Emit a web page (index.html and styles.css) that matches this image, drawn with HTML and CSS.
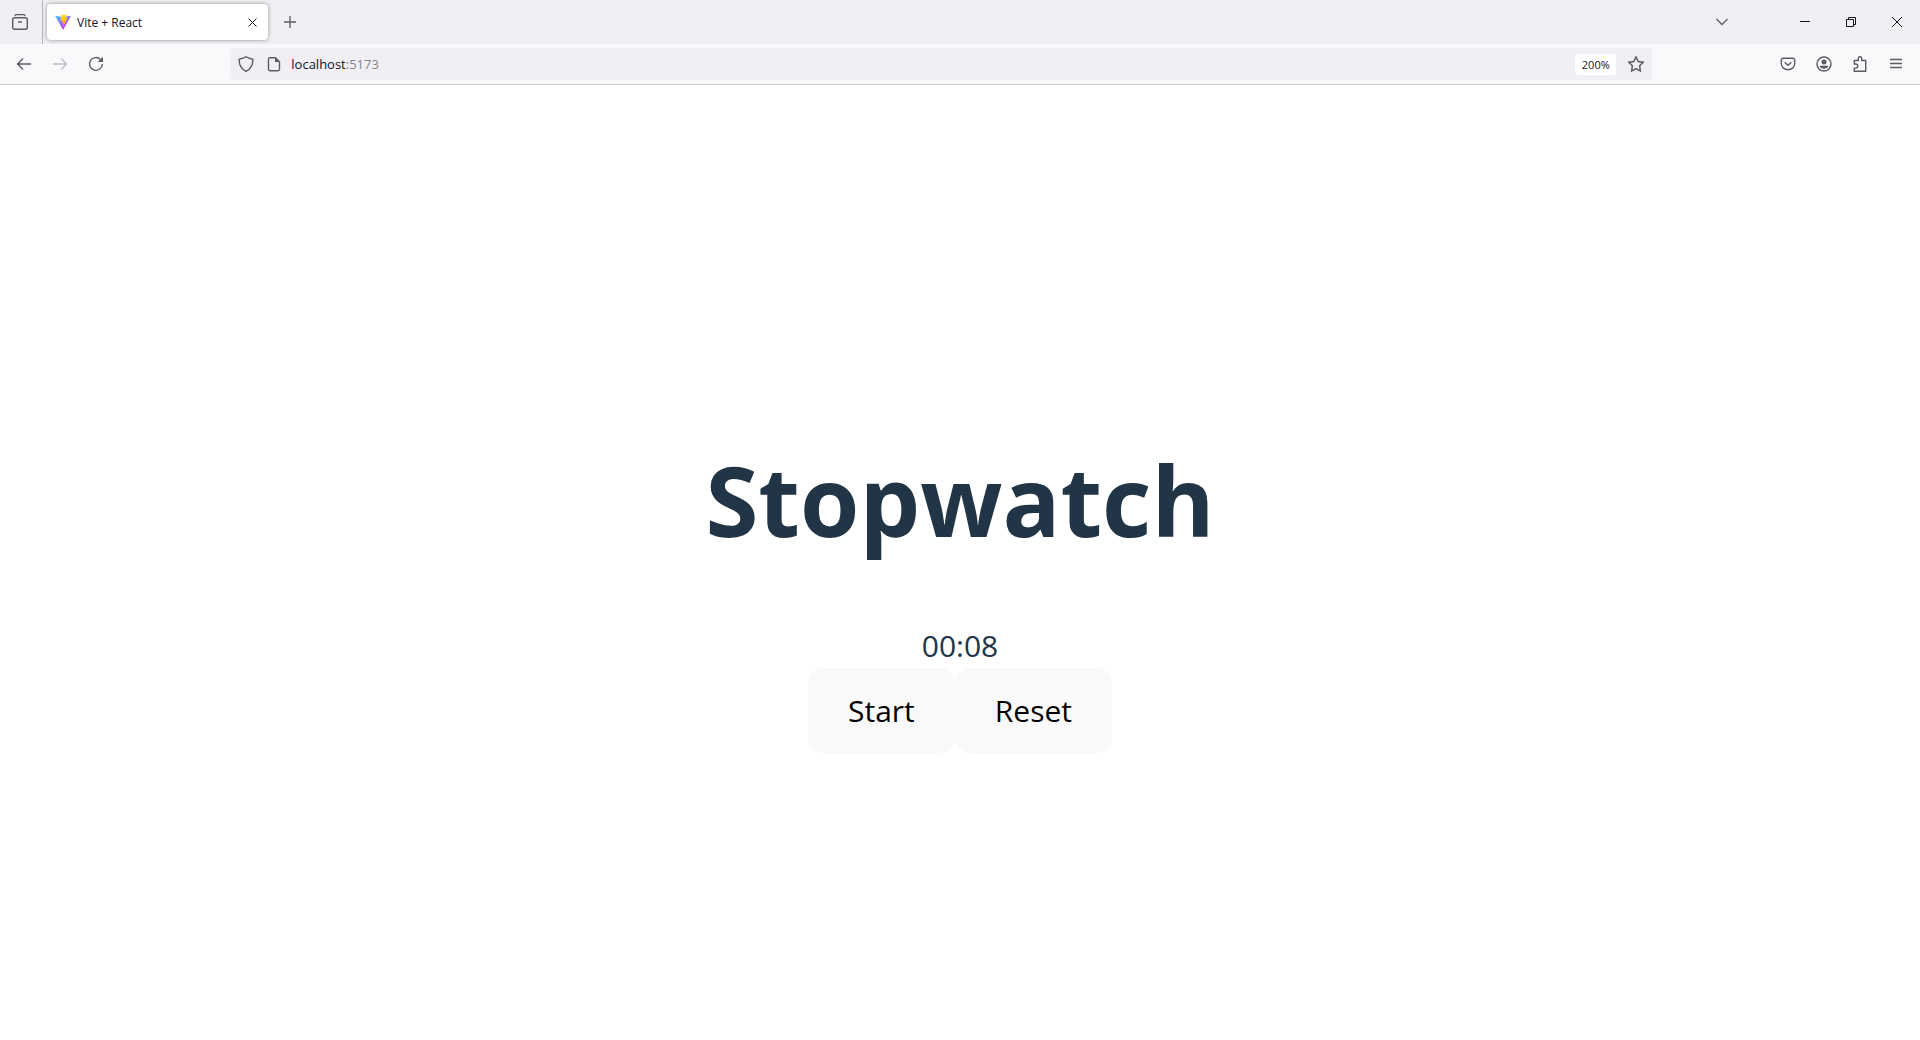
FILE: index.html
```html
<!DOCTYPE html>
<html lang="en">
<head>
<meta charset="utf-8">
<meta name="viewport" content="width=device-width, initial-scale=1">
<title>Vite + React</title>
<link rel="stylesheet" href="styles.css">
</head>
<body>
<header class="browser">
  <div class="tab-strip">
    <button class="icon-button recent" type="button" aria-label="Recent browsing">
      <svg class="icon" viewBox="0 0 16 16"><path d="M2.800 1.600 4 .6h8l1.200 1"/><rect x=".7" y="3.700" width="14.600" height="11.600" rx="2"/><path d="M6 8h4"/></svg>
    </button>
    <div class="tab">
      <svg class="favicon" viewBox="0 0 410 404" aria-hidden="true">
        <defs>
          <linearGradient id="shield" x1="6" y1="33" x2="235" y2="344" gradientUnits="userSpaceOnUse"><stop stop-color="#41d1ff"/><stop offset="1" stop-color="#bd34fe"/></linearGradient>
          <linearGradient id="bolt" x1="194" y1="9" x2="236" y2="293" gradientUnits="userSpaceOnUse"><stop stop-color="#ffea83"/><stop offset=".08" stop-color="#ffdd35"/><stop offset="1" stop-color="#ffa800"/></linearGradient>
        </defs>
        <path fill="url(#shield)" d="M400 59.500 216 388c-4 7-14 7-17.500 0L11 59.500c-4-7.500 2-16 10.500-14.800L205.500 77.500q2 .4 3.600 0L389 44.800c8-1.500 15 7 11 14.700Z"/>
        <path fill="url(#bolt)" d="M293 1.500 157 28q-4 .8-4 5l-8.500 141q0 6 6 5l38-8.700q7-.8 6 6l-11 55q-1 7 5.500 6l23.500-7q7-1 6 6l-18 87c-1 5 6 8 9 3l2-3 111-222q2-6-5-7l-39 7.500q-7 .6-6-6l25.500-88.300q1-7-5-6Z"/>
      </svg>
      <span class="tab-title">Vite + React</span>
      <button class="tab-close" type="button" aria-label="Close tab"><svg class="cross" viewBox="0 0 9 9"><path d="m.5.5 8 8m0-8-8 8"/></svg></button>
    </div>
    <button class="icon-button" type="button" aria-label="New tab"><svg class="icon-small" viewBox="0 0 12 12"><path d="M6 0v12M0 6h12"/></svg></button>
    <button class="icon-button list-tabs" type="button" aria-label="List all tabs"><svg class="icon-small" viewBox="0 0 12 12"><path d="m.5 3 5.500 5.500L11.500 3"/></svg></button>
    <div class="window-controls">
      <button type="button" aria-label="Minimize"><svg viewBox="0 0 10 10"><path d="M0 4.500h10"/></svg></button>
      <button type="button" aria-label="Restore"><svg viewBox="0 0 10 10"><path d="M.5 2.500h7v7h-7zM2.500 2.500v-2h7v7h-2"/></svg></button>
      <button type="button" aria-label="Close"><svg viewBox="0 0 10 10"><path d="m0 0 10 10m0-10L0 10"/></svg></button>
    </div>
  </div>
  <nav class="toolbar" aria-label="Navigation">
    <div class="history">
      <button class="icon-button" type="button" aria-label="Back"><svg class="icon" viewBox="0 0 16 16"><path d="M15 8H1.500M7 2.500 1.500 8 7 13.500"/></svg></button>
      <button class="icon-button" type="button" aria-label="Forward" disabled><svg class="icon" viewBox="0 0 16 16"><path d="M1 8h13.500M9 2.500 14.500 8 9 13.500"/></svg></button>
      <button class="icon-button" type="button" aria-label="Reload"><svg class="icon" viewBox="0 0 16 16"><path d="M14.300 8A6.400 6.400 0 1 1 12.500 3.500"/><path class="solid" d="M15 .7V6H9.700z"/></svg></button>
    </div>
    <div class="address-bar">
      <button class="icon-button" type="button" aria-label="Tracking protection"><svg class="icon" viewBox="0 0 16 16"><path d="M8 .8c2 1.500 4.300 2 6.800 2.400.2 5.500-1.600 9.500-6.800 12.100C2.800 12.700 1 8.700 1.200 3.200 3.700 2.800 6 2.300 8 .8Z"/></svg></button>
      <button class="icon-button page-info" type="button" aria-label="Site information"><svg class="icon" viewBox="0 0 16 16"><path d="M9.500 1.700H4a1.500 1.500 0 0 0-1.500 1.500v10A1.500 1.500 0 0 0 4 14.700h8a1.500 1.500 0 0 0 1.500-1.500V5.700z"/><path class="solid" d="M9 1.500 13.700 6H9z"/></svg></button>
      <span class="url">localhost<span class="port">:5173</span></span>
      <button class="zoom-level" type="button">200%</button>
      <button class="icon-button" type="button" aria-label="Bookmark this page"><svg class="icon" viewBox="0 0 16 16"><path d="m8 .9 2.200 4.600 5 .7-3.600 3.500.8 5.300L8 12.600 3.600 15l.8-5.300L.8 6.200l5-.7z"/></svg></button>
    </div>
    <div class="actions">
      <button class="icon-button" type="button" aria-label="Save to Pocket"><svg class="icon" viewBox="0 0 16 16"><path d="M3 2.300h10a1.700 1.700 0 0 1 1.700 1.700v3.500a6.700 6.200 0 0 1-13.400 0V4A1.700 1.700 0 0 1 3 2.300Z"/><path d="m4.700 6.200 3.300 3 3.300-3"/></svg></button>
      <button class="icon-button" type="button" aria-label="Account"><svg class="icon" viewBox="0 0 16 16"><circle cx="8" cy="8" r="7"/><circle class="solid" cx="8" cy="6" r="2.500"/><path class="solid" d="M3.700 9.700h8.600c0 4-8.600 4-8.600 0z"/></svg></button>
      <button class="icon-button" type="button" aria-label="Extensions"><svg class="icon" viewBox="0 0 16 16"><path d="M2.300 8V4.500h4V2.400a1.700 1.700 0 0 1 3.400 0v2.100h4V15.200H2.300v-3.100h1.400a2 2 0 0 0 0-4.100z"/></svg></button>
      <button class="icon-button" type="button" aria-label="Application menu"><svg class="icon-small" viewBox="0 0 12 12"><path d="M0 1.500h12M0 5.500h12M0 9.500h12"/></svg></button>
    </div>
  </nav>
</header>
<main class="page">
  <h1>Stopwatch</h1>
  <div class="time" role="timer">00:08</div>
  <div class="controls"><button type="button">Start</button><button type="button">Reset</button></div>
</main>
</body>
</html>
```
FILE: styles.css
```css
* { box-sizing: border-box; }

body {
  display: flex;
  flex-direction: column;
  min-height: 100vh;
  margin: 0;
  background: #fff;
  color: #213547;
  font-family: "Open Sans", "Noto Sans", sans-serif;
}

button {
  padding: 0;
  border: 0;
  background: none;
  color: inherit;
  font: inherit;
}

svg {
  display: block;
  flex: none;
  fill: none;
  stroke: currentColor;
}

.solid { fill: currentColor; stroke: none; }
.icon { width: 16px; height: 16px; stroke-width: 1.4; }
.icon-small { width: 12px; height: 12px; stroke-width: 1.3; }
.favicon { width: 16px; height: 16px; stroke: none; }
.cross { width: 9px; height: 9px; }

.browser {
  border-bottom: 1px solid #ccc;
  background: #f9f9fb;
  color: #5b5b66;
}

.tab-strip {
  display: flex;
  align-items: center;
  height: 44px;
  background: #f0f0f4;
}

.icon-button {
  display: grid;
  place-items: center;
  flex: none;
  width: 36px;
  height: 32px;
}

.icon-button:disabled { color: #bebec3; }

.recent {
  width: 43px;
  height: 44px;
  padding-right: 3px;
  border-right: 1px solid #b5b5ba;
}

.tab {
  display: flex;
  align-items: center;
  gap: 6px;
  width: 221px;
  height: 36px;
  margin: 0 4px;
  padding: 0 8px;
  border-radius: 4px;
  background: #fff;
  box-shadow: 0 0 4px rgba(0, 0, 0, 0.4);
  color: #15141a;
  font-size: 12px;
}

.tab-title { flex: 1; }

.tab-close {
  display: grid;
  place-items: center;
  width: 16px;
  height: 24px;
}

.list-tabs { margin-left: auto; }

.window-controls {
  display: flex;
  margin-left: 42px;
  color: #15141a;
}

.window-controls button {
  display: grid;
  place-items: center;
  width: 46px;
  height: 44px;
}

.window-controls svg { width: 10px; height: 10px; }

.toolbar {
  display: grid;
  grid-template-columns: 6fr minmax(0, 1422px) 7fr;
  align-items: center;
  height: 40px;
  padding: 0 6px;
}

.history, .actions { display: flex; }
.actions { justify-content: flex-end; }

.address-bar {
  display: flex;
  align-items: center;
  height: 32px;
  border-radius: 4px;
  background: #f0f0f4;
}

.address-bar .icon-button { width: 32px; }
.address-bar .page-info { width: 24px; }

.url {
  flex: 1;
  padding-left: 5px;
  color: #15141a;
  font-size: 13px;
}

.port { color: #85858c; }

.zoom-level {
  width: 41px;
  height: 21px;
  margin-right: 4px;
  border-radius: 3px;
  background: #fff;
  color: #15141a;
  font-size: 11px;
}

.page {
  display: flex;
  flex: 1;
  flex-direction: column;
  align-items: center;
  justify-content: center;
  padding: 0 64px;
}

h1 {
  margin: 68px 0 64px;
  font-size: 96px;
  font-weight: 700;
  line-height: 120px;
}

.time {
  font-size: 30px;
  line-height: 44px;
}

.controls { display: flex; }

.controls button {
  height: 85px;
  padding: 0 40px;
  border-radius: 16px;
  background: #f9f9f9;
  color: #000;
  font-size: 30px;
}
```
